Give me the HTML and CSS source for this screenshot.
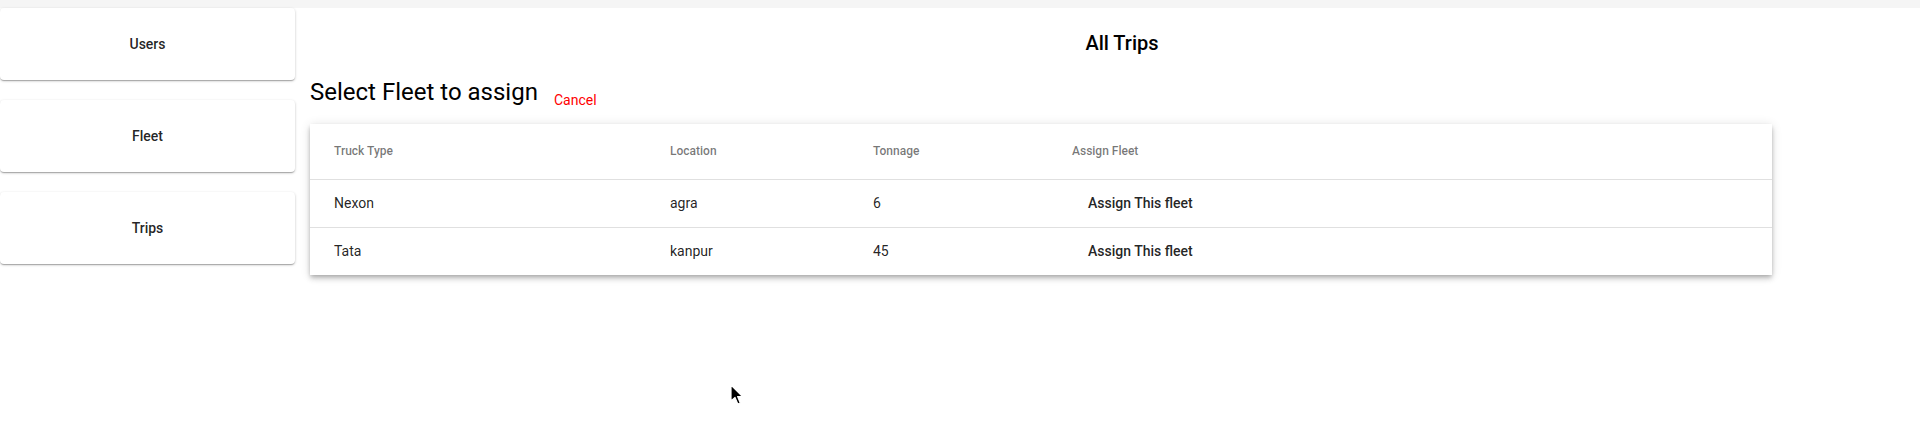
FILE: index.html
```html
<!DOCTYPE html>
<html lang="en">
<head>
<meta charset="utf-8">
<title>All Trips</title>
<link rel="stylesheet" href="styles.css">
</head>
<body>
<div class="topbar"></div>
<div class="layout">
  <nav class="sidebar">
    <div class="nav-card">Users</div>
    <div class="nav-card">Fleet</div>
    <div class="nav-card">Trips</div>
  </nav>
  <main class="main">
    <h2 class="page-title">All Trips</h2>
    <div class="heading-row">
      <h1 class="heading">Select Fleet to assign</h1>
      <span class="cancel">Cancel</span>
    </div>
    <div class="table-card">
      <table class="fleet-table">
        <colgroup>
          <col class="c1"><col class="c2"><col class="c3"><col class="c4">
        </colgroup>
        <thead>
          <tr><th>Truck Type</th><th>Location</th><th>Tonnage</th><th>Assign Fleet</th></tr>
        </thead>
        <tbody>
          <tr><td>Nexon</td><td>agra</td><td>6</td><td><span class="assign-btn">Assign This fleet</span></td></tr>
          <tr><td>Tata</td><td>kanpur</td><td>45</td><td><span class="assign-btn">Assign This fleet</span></td></tr>
        </tbody>
      </table>
    </div>
  </main>
</div>
<svg class="cursor" width="14" height="22" viewBox="0 0 14 22"><path d="M1 1 L1 17 L5 13.5 L7.8 20 L10.3 19 L7.6 12.6 L12.5 12.6 Z" fill="#000" stroke="#fff" stroke-width="1.2" stroke-linejoin="round"/></svg>
</body>
</html>
```
FILE: styles.css
```css
* { box-sizing: border-box; }
html, body { margin: 0; padding: 0; background: #fff; }
body {
  font-family: Roboto, "Noto Sans", "Liberation Sans", sans-serif;
  color: rgba(0,0,0,0.87);
  width: 1920px;
  height: 428px;
  overflow: hidden;
  position: relative;
}
.topbar { height: 8px; background: #f5f5f5; }
.layout { display: flex; align-items: flex-start; }
.sidebar {
  width: 295px;
  flex: 0 0 295px;
  display: flex;
  flex-direction: column;
  gap: 20px;
}
.nav-card {
  height: 72px;
  display: flex;
  align-items: center;
  justify-content: center;
  font-size: 14px;
  font-weight: 500;
  background: #fff;
  border-radius: 4px;
  box-shadow: 0px 1px 3px 0px rgba(0,0,0,0.2), 0px 1px 1px 0px rgba(0,0,0,0.14), 0px 2px 1px -1px rgba(0,0,0,0.12);
}
.main { flex: 1; padding-left: 15px; }
.page-title {
  margin: 20px 0 0 0;
  padding-left: 14px;
  text-align: center;
  font-size: 20px;
  font-weight: 500;
  line-height: 30px;
  color: #000;
}
.heading-row {
  display: flex;
  align-items: flex-start;
  margin-top: 18px;
}
.heading {
  margin: 0;
  font-size: 24px;
  font-weight: 400;
  line-height: 32px;
  color: #000;
}
.cancel {
  margin-left: 16px;
  margin-top: 14px;
  font-size: 14px;
  line-height: 20px;
  color: #ff0000;
}
.table-card {
  margin-top: 14px;
  width: 1462px;
  background: #fff;
  box-shadow: 0px 2px 4px -1px rgba(0,0,0,0.2), 0px 4px 5px 0px rgba(0,0,0,0.14), 0px 1px 10px 0px rgba(0,0,0,0.12);
}
.fleet-table {
  width: 100%;
  border-collapse: collapse;
  table-layout: fixed;
}
.c1 { width: 336px; }
.c2 { width: 203px; }
.c3 { width: 199px; }
.fleet-table th, .fleet-table td {
  text-align: left;
  padding: 4px 56px 4px 24px;
  border-bottom: 1px solid #e0e0e0;
}
.fleet-table tbody tr:last-child td { border-bottom: 0; }
.fleet-table th {
  height: 55px;
  font-size: 12px;
  font-weight: 500;
  color: rgba(0,0,0,0.54);
}
.fleet-table td {
  height: 48px;
  font-size: 14px;
  font-weight: 400;
  color: rgba(0,0,0,0.87);
}
.assign-btn {
  display: inline-block;
  padding: 8px 16px;
  font-size: 14px;
  font-weight: 500;
  line-height: 20px;
  color: rgba(0,0,0,0.87);
}
.cursor { position: absolute; left: 730px; top: 384px; }
```
